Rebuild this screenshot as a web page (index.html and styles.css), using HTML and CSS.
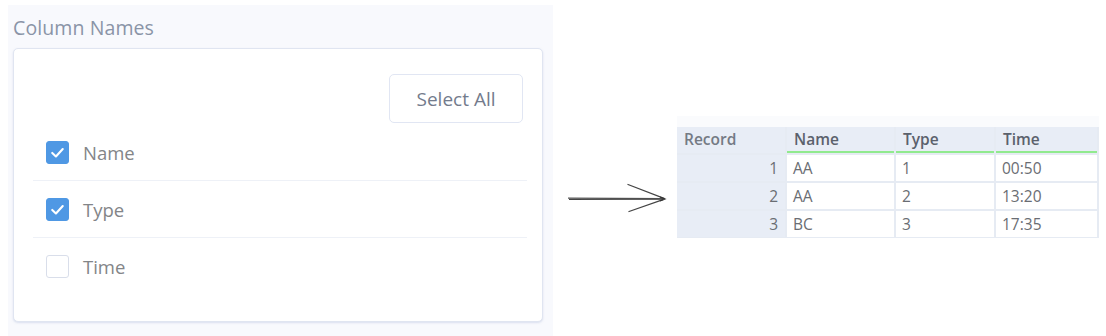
FILE: index.html
```html
<!DOCTYPE html>
<html>
<head>
<meta charset="utf-8">
<link rel="stylesheet" href="styles.css">
</head>
<body>
<div class="page">
  <div class="panel">
    <div class="panel-title">Column Names</div>
    <div class="card">
      <div class="toolbar"><button class="btn">Select All</button></div>
      <ul class="list">
        <li class="item">
          <span class="cb checked"><svg viewBox="0 0 24 24" width="23" height="23"><polyline points="6,12.5 10.2,16.5 18,8" fill="none" stroke="#fff" stroke-width="2.4" stroke-linecap="round" stroke-linejoin="round"/></svg></span>
          <span class="label">Name</span>
        </li>
        <li class="item">
          <span class="cb checked"><svg viewBox="0 0 24 24" width="23" height="23"><polyline points="6,12.5 10.2,16.5 18,8" fill="none" stroke="#fff" stroke-width="2.4" stroke-linecap="round" stroke-linejoin="round"/></svg></span>
          <span class="label">Type</span>
        </li>
        <li class="item">
          <span class="cb"></span>
          <span class="label">Time</span>
        </li>
      </ul>
    </div>
  </div>
  <svg class="arrow" width="102" height="34" viewBox="0 0 102 34">
    <path d="M2 16.2 L98 16.6" stroke="#555" stroke-width="1.2" fill="none"/>
    <path d="M3 17.4 L97 17.2" stroke="#444" stroke-width="1.1" fill="none"/>
    <path d="M62 2.5 L98 16.4" stroke="#444" stroke-width="1.3" fill="none" stroke-linecap="round"/>
    <path d="M63 29.5 L97 17.6" stroke="#444" stroke-width="1.3" fill="none" stroke-linecap="round"/>
    <path d="M94 15 L99 17 L94 19" stroke="#333" stroke-width="1.2" fill="none"/>
  </svg>
  <div class="table-wrap">
    <div class="table-top"></div>
    <div class="grid">
      <div class="th rec">Record</div>
      <div class="th col">Name</div>
      <div class="th col">Type</div>
      <div class="th col">Time</div>

      <div class="td rec">1</div>
      <div class="td">AA</div>
      <div class="td">1</div>
      <div class="td">00:50</div>

      <div class="td rec">2</div>
      <div class="td">AA</div>
      <div class="td">2</div>
      <div class="td">13:20</div>

      <div class="td rec">3</div>
      <div class="td">BC</div>
      <div class="td">3</div>
      <div class="td">17:35</div>
    </div>
  </div>
</div>
</body>
</html>
```

FILE: styles.css
```css
* { box-sizing: border-box; }
body {
  margin: 0;
  background: #ffffff;
  font-family: "Open Sans", "Noto Sans", sans-serif;
}
.page {
  display: flex;
  align-items: flex-start;
  width: 1106px;
  height: 336px;
  overflow: hidden;
}
.panel {
  margin: 5px 0 0 8px;
  width: 545px;
  height: 331px;
  background: #f8f9fd;
  padding: 0 10px 0 5px;
}
.panel-title {
  height: 43px;
  padding: 10px 0 0 0;
  font-size: 19.5px;
  color: #8a94a7;
  line-height: 26px;
  letter-spacing: 0.1px;
}
.card {
  height: 274px;
  background: #ffffff;
  border: 1px solid #e0e5f1;
  border-radius: 5px;
  box-shadow: 0 1px 2px rgba(190, 200, 225, 0.5);
}
.toolbar {
  display: flex;
  justify-content: flex-end;
  padding: 25px 19px 0 0;
}
.btn {
  width: 134px;
  height: 49px;
  background: #fff;
  border: 1.5px solid #e1e6f3;
  border-radius: 5px;
  font-family: "Open Sans", "Noto Sans", sans-serif;
  font-size: 19px;
  color: #737b8c;
  padding: 0;
}
.list {
  list-style: none;
  margin: 0;
  padding: 1px 15px 0 19px;
}
.item {
  display: flex;
  align-items: center;
  height: 57px;
  padding-left: 13px;
  border-bottom: 1px solid #eef1f7;
}
.item:last-child { border-bottom: none; }
.cb {
  width: 23px;
  height: 23px;
  border-radius: 3px;
  border: 1.5px solid #d9deea;
  background: #fff;
  display: flex;
  align-items: center;
  justify-content: center;
}
.cb.checked {
  background: #4f98e4;
  border-color: #4f98e4;
}
.cb svg { display: block; }
.label {
  margin-left: 14px;
  font-size: 18.5px;
  color: #838588;
}
.arrow {
  margin: 182px 0 0 13px;
  display: block;
}
.table-wrap {
  margin: 116px 0 0 9px;
  width: 422px;
}
.table-top {
  height: 11px;
  background: #fafbfd;
}
.grid {
  display: grid;
  grid-template-columns: 108px 107px 98px 101px;
  grid-template-rows: 26px 26px 26px 26px;
  gap: 2px;
  background: #e6ebf3;
  padding: 0 2px 1px 0;
  font-size: 15.5px;
}
.th {
  background: #e8edf6;
  font-weight: 600;
  color: #5b616c;
  padding: 1px 0 0 7px;
  line-height: 22px;
}
.th.rec { color: #747a84; }
.th.col { border-bottom: 2.5px solid #91ea8e; }
.td {
  background: #fff;
  color: #6a6d73;
  padding: 0 0 0 6px;
  line-height: 26px;
}
.td.rec {
  background: #e8edf6;
  text-align: right;
  padding: 0 7px 0 0;
}
```
